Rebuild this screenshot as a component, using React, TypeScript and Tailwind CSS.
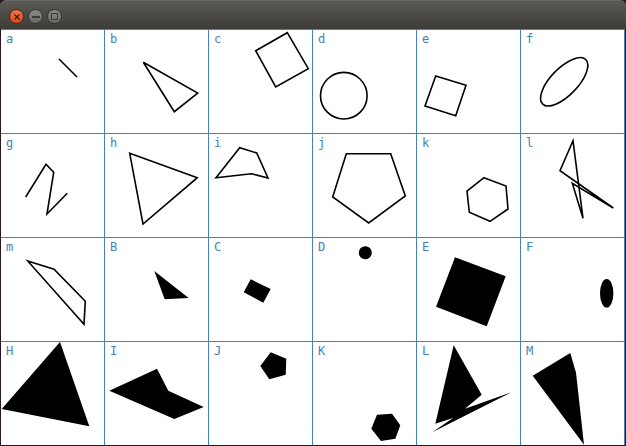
import React from 'react';

type Cell = { label: string; shape: React.ReactNode };

const stroke = { stroke: '#000', strokeWidth: 1.6, fill: 'none', strokeLinejoin: 'miter' as const };
const solid = { fill: '#000', stroke: 'none' };

const cells: Cell[] = [
  { label: 'a', shape: <line x1={59} y1={30} x2={77} y2={48} {...stroke} /> },
  { label: 'b', shape: <polygon points="39.3,33.3 93.7,64 70.3,82.7" {...stroke} /> },
  { label: 'c', shape: <polygon points="47.7,21.7 79.3,3.7 100.3,39.7 67.7,58" {...stroke} /> },
  { label: 'd', shape: <circle cx={31.8} cy={66.7} r={23.3} {...stroke} /> },
  { label: 'e', shape: <polygon points="19.7,47 50,56.3 39.7,86.7 9,77" {...stroke} /> },
  {
    label: 'f',
    shape: <ellipse cx={44.2} cy={52.8} rx={31} ry={13.5} transform="rotate(-46 44.2 52.8)" {...stroke} />,
  },
  { label: 'g', shape: <polyline points="25.7,64 46,31.3 53.7,39.3 47,81 67.3,60.3" {...stroke} /> },
  { label: 'h', shape: <polygon points="25.7,20.3 93.3,44.7 39,91" {...stroke} /> },
  { label: 'i', shape: <polygon points="8,44.7 31.7,14.7 48.7,20 60,45 43.3,40.7" {...stroke} /> },
  { label: 'j', shape: <polygon points="34.3,20.7 78.7,20.7 93.3,63 56.7,90 20.7,64" {...stroke} /> },
  { label: 'k', shape: <polygon points="68,44.7 90,53 92,76 74,88.3 53.3,79.3 51,58" {...stroke} /> },
  { label: 'l', shape: <polygon points="53,7.7 40,37.7 93.3,75 52.3,50.3 63,85.3" {...stroke} /> },
  { label: 'm', shape: <polygon points="27.7,24 54,32.3 85.3,64.3 84,87.3" {...stroke} /> },
  { label: 'B', shape: <polygon points="50.3,34 84.7,61 60.7,62.3" {...solid} /> },
  { label: 'C', shape: <polygon points="42.7,42.3 62.7,52 55.3,65.7 35.7,55.3" {...solid} /> },
  { label: 'D', shape: <circle cx={53.3} cy={15.7} r={6.5} {...solid} /> },
  { label: 'E', shape: <polygon points="39,20.3 89.7,39.3 70.7,89.3 20,69.7" {...solid} /> },
  { label: 'F', shape: <ellipse cx={86.7} cy={56.3} rx={6.7} ry={14.3} {...solid} /> },
  { label: 'H', shape: <polygon points="60,1 89.3,85.3 1.7,68" {...solid} /> },
  { label: 'I', shape: <polygon points="5.3,49.7 53,27.7 64.3,49.7 99.7,66 70.3,78" {...solid} /> },
  { label: 'J', shape: <polygon points="62.7,11.3 78.3,17.7 77.7,33.7 61.3,38.3 52.3,25" {...solid} /> },
  { label: 'K', shape: <polygon points="65,73.7 80,72.7 88.3,84.3 83.3,97.7 69,100 59.3,87.7" {...solid} /> },
  {
    label: 'L',
    shape: <polygon points="37.7,4.3 65.7,53.7 49,67.7 95.3,51.3 16.3,91.3 37,77 19.3,82.7" {...solid} />,
  },
  { label: 'M', shape: <polygon points="12.7,34.7 50.3,12 56,31.7 64,103.7" {...solid} /> },
];

const TitleBar: React.FC = () => (
  <div className="h-[29px] shrink-0 rounded-t-[6px] bg-gradient-to-b from-[#5c5a54] to-[#3d3c38] border-t border-[#6a6862] flex items-center gap-[4px] pl-[9px] pt-[3px]">
    <div className="w-[15px] h-[15px] rounded-full bg-gradient-to-b from-[#f07746] to-[#df4a16] border border-[#3a2a22] flex items-center justify-center">
      <svg width="8" height="8" viewBox="0 0 8 8">
        <path d="M1.5 1.5 L6.5 6.5 M6.5 1.5 L1.5 6.5" stroke="#4a1c0a" strokeWidth="1.3" />
      </svg>
    </div>
    <div className="w-[15px] h-[15px] rounded-full bg-gradient-to-b from-[#8e8c86] to-[#6a6863] border border-[#35342f] flex items-center justify-center">
      <div className="w-[8px] h-[2px] bg-[#3c3b37]" />
    </div>
    <div className="w-[15px] h-[15px] rounded-full bg-gradient-to-b from-[#8e8c86] to-[#6a6863] border border-[#35342f] flex items-center justify-center">
      <div className="w-[7px] h-[7px] border-[1.5px] border-[#3c3b37]" />
    </div>
  </div>
);

export default function App() {
  return (
    <div className="w-[626px] h-[446px] bg-[#2d1426] flex flex-col overflow-hidden">
      <TitleBar />
      <div className="flex-1 mx-[1px] mb-[1px] overflow-hidden bg-white border-t border-[#4682b4]">
        <div className="grid grid-cols-[repeat(6,104px)] auto-rows-[104px]">
          {cells.map((c) => (
            <div key={c.label} className="relative border-r border-b border-[#4682b4]">
              <svg width="103" height="103" viewBox="1 1 103 103" className="block">
                {c.shape}
              </svg>
              <span className="absolute left-[5px] top-[3px] text-[12px] leading-none text-[#4682b4] font-['DejaVu_Sans_Mono',monospace]">
                {c.label}
              </span>
            </div>
          ))}
        </div>
      </div>
    </div>
  );
}
